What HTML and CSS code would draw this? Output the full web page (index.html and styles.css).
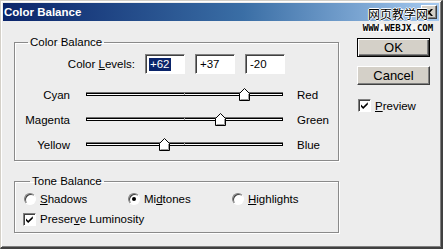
FILE: index.html
```html
<!DOCTYPE html>
<html>
<head>
<meta charset="utf-8">
<link rel="stylesheet" href="styles.css">
</head>
<body>
<div class="window">
  <div class="titlebar">
    <span class="title">Color Balance</span>
    <span class="close"><svg width="8" height="7" viewBox="0 0 8 7"><path d="M0 0H2L4 2L6 0H8L5 3.5L8 7H6L4 5L2 7H0L3 3.5Z" fill="#000"/></svg></span>
  </div>
  <div class="content">
    <div class="main">
      <fieldset class="group group-cb">
        <legend>Color Balance</legend>
        <div class="levels">
          <span class="levels-label">Color <u>L</u>evels:</span>
          <span class="field"><span class="sel">+62</span></span>
          <span class="field">+37</span>
          <span class="field">-20</span>
        </div>
        <div class="sliders">
          <div class="slider-row">
            <span class="lbl-left">Cyan</span>
            <div class="track"><span class="tick"></span><svg class="thumb" style="--pos:81%" width="11" height="13" viewBox="0 0 11 13"><path d="M0.5 12.5V5.5L5.5 0.5L10.5 5.5V12.5Z" fill="#fff" stroke="#000"/><path d="M9.5 6V11.5H1.5" fill="none" stroke="#9a9a9a"/></svg></div>
            <span class="lbl-right">Red</span>
          </div>
          <div class="slider-row">
            <span class="lbl-left">Magenta</span>
            <div class="track"><span class="tick"></span><svg class="thumb" style="--pos:68.5%" width="11" height="13" viewBox="0 0 11 13"><path d="M0.5 12.5V5.5L5.5 0.5L10.5 5.5V12.5Z" fill="#fff" stroke="#000"/><path d="M9.5 6V11.5H1.5" fill="none" stroke="#9a9a9a"/></svg></div>
            <span class="lbl-right">Green</span>
          </div>
          <div class="slider-row">
            <span class="lbl-left">Yellow</span>
            <div class="track"><span class="tick"></span><svg class="thumb" style="--pos:40%" width="11" height="13" viewBox="0 0 11 13"><path d="M0.5 12.5V5.5L5.5 0.5L10.5 5.5V12.5Z" fill="#fff" stroke="#000"/><path d="M9.5 6V11.5H1.5" fill="none" stroke="#9a9a9a"/></svg></div>
            <span class="lbl-right">Blue</span>
          </div>
        </div>
      </fieldset>
      <fieldset class="group group-tone">
        <legend>Tone Balance</legend>
        <div class="radios">
          <span class="opt"><span class="radio"></span><span><u>S</u>hadows</span></span>
          <span class="opt"><span class="radio on"></span><span>Mi<u>d</u>tones</span></span>
          <span class="opt"><span class="radio"></span><span><u>H</u>ighlights</span></span>
        </div>
        <span class="opt lum"><span class="check"><svg width="11" height="11" viewBox="0 0 11 11"><path d="M2 4.5L4.2 6.8L8.8 2.2V4.4L4.2 9L2 6.7Z" fill="#000"/></svg></span><span>Preser<u>v</u>e Luminosity</span></span>
      </fieldset>
    </div>
    <div class="side">
      <button class="btn default">OK</button>
      <button class="btn cancel">Cancel</button>
      <span class="opt preview"><span class="check"><svg width="11" height="11" viewBox="0 0 11 11"><path d="M2 4.5L4.2 6.8L8.8 2.2V4.4L4.2 9L2 6.7Z" fill="#000"/></svg></span><span><u>P</u>review</span></span>
    </div>
  </div>
  <div class="watermark">
    <span class="wm-cn">网页教学网</span>
    <span class="wm-url">WWW.WEBJX.COM</span>
  </div>
</div>
</body>
</html>
```
FILE: styles.css
```css
* { box-sizing: border-box; }
html, body { margin: 0; padding: 0; }
body {
  font-family: "Liberation Sans", Arial, sans-serif;
  font-size: 11.5px;
  color: #000;
  background: #ededed;
}
.window {
  width: 443px;
  height: 249px;
  position: relative;
  background: #ededed;
  border-style: solid;
  border-width: 1px 2px 2px 1px;
  border-color: #d4d0c8 #404040 #404040 #d4d0c8;
  box-shadow: inset 1px 1px 0 #fff, inset -1px -1px 0 #808080;
  padding: 2px 2px 0 2px;
  overflow: hidden;
}
.titlebar {
  height: 18px;
  display: flex;
  align-items: center;
  justify-content: space-between;
  background: linear-gradient(to right, #0a246a, #3a6ea5 55%, #a6caf0);
  padding: 0 2px 0 1px;
}
.title {
  color: #fff;
  font-weight: bold;
  font-size: 11.5px;
}
.close {
  width: 16px;
  height: 14px;
  background: #d4d0c8;
  border: 1px solid;
  border-color: #fff #404040 #404040 #fff;
  box-shadow: inset -1px -1px 0 #808080;
  display: flex;
  align-items: center;
  justify-content: center;
}
.close svg { display: block; }
.content {
  display: flex;
  padding: 14px 0 0 11px;
}
.main {
  width: 325px;
  display: flex;
  flex-direction: column;
}
.group {
  margin: 0;
  padding: 0;
  border: 1px solid #8a8a8a;
  box-shadow: inset 1px 1px 0 #fff, 1px 1px 0 #fff;
  min-width: 0;
}
.group legend {
  padding: 0 2px;
  line-height: 14px;
  font-size: 11.5px;
}
.group-cb { height: 126px; padding-top: 5px; }
.group-cb legend { margin-left: 13px; }
.group-tone { height: 59px; margin-top: 13px; padding: 3px 0 0 9px; }
.group-tone legend { margin-left: 6px; }

.levels {
  display: flex;
  align-items: center;
  gap: 10px;
  height: 20px;
}
.levels-label { width: 120px; text-align: right; }
.field {
  width: 40px;
  height: 20px;
  background: #fff;
  border: 1px solid;
  border-color: #808080 #fff #fff #808080;
  box-shadow: inset 1px 1px 0 #404040;
  padding-left: 4px;
  display: flex;
  align-items: center;
}
.sel {
  background: #0a246a;
  color: #fff;
  line-height: 13px;
  padding: 0 1px;
  margin-left: -1px;
}
.sliders { margin-top: 8px; }
.slider-row {
  display: flex;
  align-items: center;
  height: 25px;
}
.lbl-left { width: 55px; text-align: right; margin-right: 16px; }
.lbl-right { margin-left: 14px; }
.track {
  position: relative;
  width: 197px;
  height: 3px;
  border: 1px solid #000;
  background: #fff;
  box-shadow: 0 -1px 0 #707070;
}
.tick {
  position: absolute;
  left: 97px;
  top: -1px;
  width: 1px;
  height: 2px;
  background: #9a9a9a;
}
.thumb {
  position: absolute;
  top: -6px;
  left: calc(var(--pos) - 6px);
  display: block;
}

.radios {
  display: grid;
  grid-template-columns: 104px 104px auto;
  height: 16px;
  align-items: center;
}
.opt { display: flex; align-items: center; }
.radio {
  position: relative;
  width: 12px;
  height: 12px;
  margin-right: 4px;
  border-radius: 50%;
  border: 1px solid;
  border-color: #808080 #fff #fff #808080;
  box-shadow: inset 1px 1px 0 #404040;
  background: #fff;
}
.radio.on::after {
  content: "";
  position: absolute;
  left: 3px;
  top: 3px;
  width: 4px;
  height: 4px;
  border-radius: 50%;
  background: #000;
}
.check {
  width: 13px;
  height: 13px;
  margin-right: 4px;
  border: 1px solid;
  border-color: #808080 #fff #fff #808080;
  box-shadow: inset 1px 1px 0 #404040;
  background: #fff;
  display: flex;
  align-items: center;
  justify-content: center;
}
.check svg { display: block; }
.lum { height: 16px; margin-top: 4px; margin-left: -1px; }

.side {
  width: 73px;
  margin-left: 18px;
  padding-top: 3px;
  display: flex;
  flex-direction: column;
}
.btn {
  width: 73px;
  height: 19px;
  padding: 0;
  background: #d4d0c8;
  border: 1px solid;
  border-color: #fff #404040 #404040 #fff;
  box-shadow: inset -1px -1px 0 #808080;
  font-family: "Liberation Sans", Arial, sans-serif;
  font-size: 13px;
  color: #000;
}
.btn.default {
  border: 1px solid #000;
  box-shadow: inset 1px 1px 0 #fff, inset -1px -1px 0 #404040, inset -2px -2px 0 #808080;
}
.btn.cancel { margin-top: 9px; }
.preview { margin-top: 14px; margin-left: 1px; height: 13px; }

.watermark {
  position: absolute;
  left: 360px;
  top: 6px;
  display: flex;
  flex-direction: column;
  align-items: center;
  width: 74px;
}
.wm-cn {
  font-family: "Noto Sans CJK SC", sans-serif;
  font-size: 12px;
  line-height: 14px;
  color: #000;
  text-shadow: 1px 0 #fff, -1px 0 #fff, 0 1px #fff, 0 -1px #fff;
}
.wm-url {
  margin-top: 3px;
  font-family: "DejaVu Sans Mono", monospace;
  font-weight: bold;
  font-size: 9px;
  line-height: 8px;
  color: #000;
  background: rgba(255,255,255,0.6);
}
```
